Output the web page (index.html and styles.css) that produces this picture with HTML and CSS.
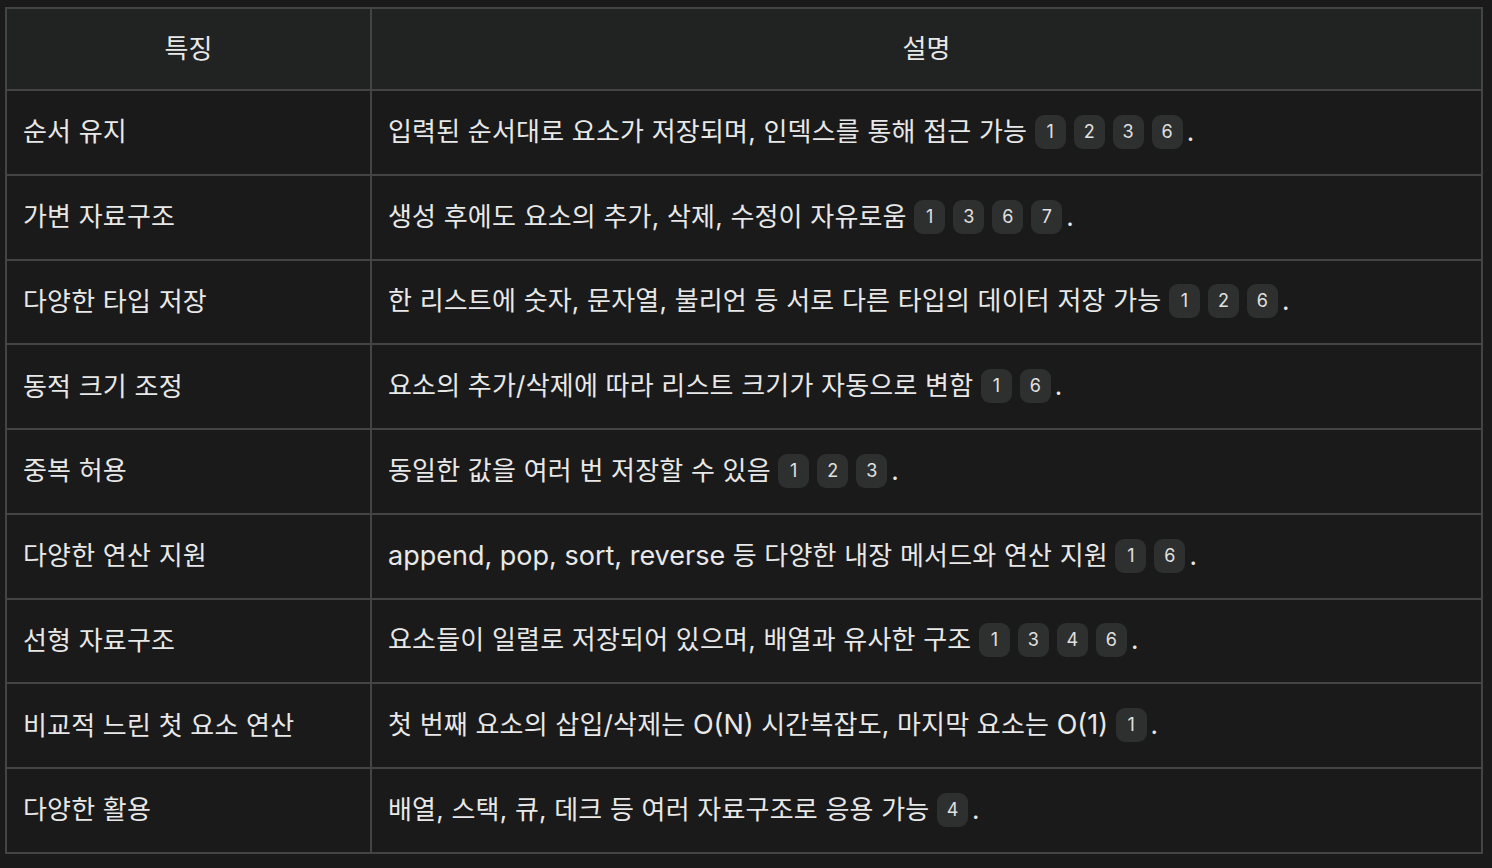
FILE: index.html
```html
<!DOCTYPE html>
<html lang="ko">
<head>
<meta charset="utf-8">
<link rel="stylesheet" href="styles.css">
</head>
<body>
<div class="wrap">
<table class="tbl">
  <thead>
    <tr><th class="c1">특징</th><th>설명</th></tr>
  </thead>
  <tbody>
    <tr><td>순서 유지</td><td>입력된 순서대로 요소가 저장되며, 인덱스를 통해 접근 가능 <span class="refs"><span class="b">1</span><span class="b">2</span><span class="b">3</span><span class="b">6</span></span>.</td></tr>
    <tr><td>가변 자료구조</td><td>생성 후에도 요소의 추가, 삭제, 수정이 자유로움 <span class="refs"><span class="b">1</span><span class="b">3</span><span class="b">6</span><span class="b">7</span></span>.</td></tr>
    <tr><td>다양한 타입 저장</td><td>한 리스트에 숫자, 문자열, 불리언 등 서로 다른 타입의 데이터 저장 가능 <span class="refs"><span class="b">1</span><span class="b">2</span><span class="b">6</span></span>.</td></tr>
    <tr><td>동적 크기 조정</td><td>요소의 추가/삭제에 따라 리스트 크기가 자동으로 변함 <span class="refs"><span class="b">1</span><span class="b">6</span></span>.</td></tr>
    <tr><td>중복 허용</td><td>동일한 값을 여러 번 저장할 수 있음 <span class="refs"><span class="b">1</span><span class="b">2</span><span class="b">3</span></span>.</td></tr>
    <tr><td>다양한 연산 지원</td><td><span class="lat">append, pop, sort, reverse</span> 등 다양한 내장 메서드와 연산 지원 <span class="refs"><span class="b">1</span><span class="b">6</span></span>.</td></tr>
    <tr><td>선형 자료구조</td><td>요소들이 일렬로 저장되어 있으며, 배열과 유사한 구조 <span class="refs"><span class="b">1</span><span class="b">3</span><span class="b">4</span><span class="b">6</span></span>.</td></tr>
    <tr><td>비교적 느린 첫 요소 연산</td><td>첫 번째 요소의 삽입/삭제는 <span class="lat">O(N)</span> 시간복잡도, 마지막 요소는 <span class="lat">O(1)</span> <span class="refs"><span class="b">1</span></span>.</td></tr>
    <tr><td>다양한 활용</td><td>배열, 스택, 큐, 데크 등 여러 자료구조로 응용 가능 <span class="refs"><span class="b">4</span></span>.</td></tr>
  </tbody>
</table>
</div>
</body>
</html>
```

FILE: styles.css
```css
html, body {
  margin: 0;
  padding: 0;
  background: #1a1a1a;
}
body {
  font-family: "Inter", "Noto Sans CJK KR", sans-serif;
  color: #e8e8e8;
}
.wrap {
  padding: 7px 9px 0 5px;
}
.tbl {
  width: 100%;
  border-collapse: collapse;
  border: 2px solid #444444;
  font-size: 26px;
  line-height: 36px;
}
.tbl th {
  background: #212222;
  font-weight: 400;
  text-align: center;
  padding: 22px 16px 22px;
  border: 2px solid #444444;
}
.tbl th.c1 {
  width: 331px;
}
.tbl tbody tr {
  height: 84.75px;
}
.tbl td {
  padding: 0 16px;
  border: 2px solid #444444;
  vertical-align: middle;
  white-space: nowrap;
  letter-spacing: 0.2px;
}
.lat {
  font-size: 27px;
  letter-spacing: 0;
}
.refs {
  display: inline-flex;
  gap: 8px;
  vertical-align: middle;
  margin-right: 4px;
  position: relative;
  top: -2px;
  letter-spacing: 0;
}
.b {
  display: inline-flex;
  align-items: center;
  justify-content: center;
  width: 31px;
  height: 34px;
  border-radius: 9px;
  background: #2e2f2f;
  font-family: "Inter", sans-serif;
  font-size: 18px;
  line-height: 1;
  color: #e0e0e0;
}
```
